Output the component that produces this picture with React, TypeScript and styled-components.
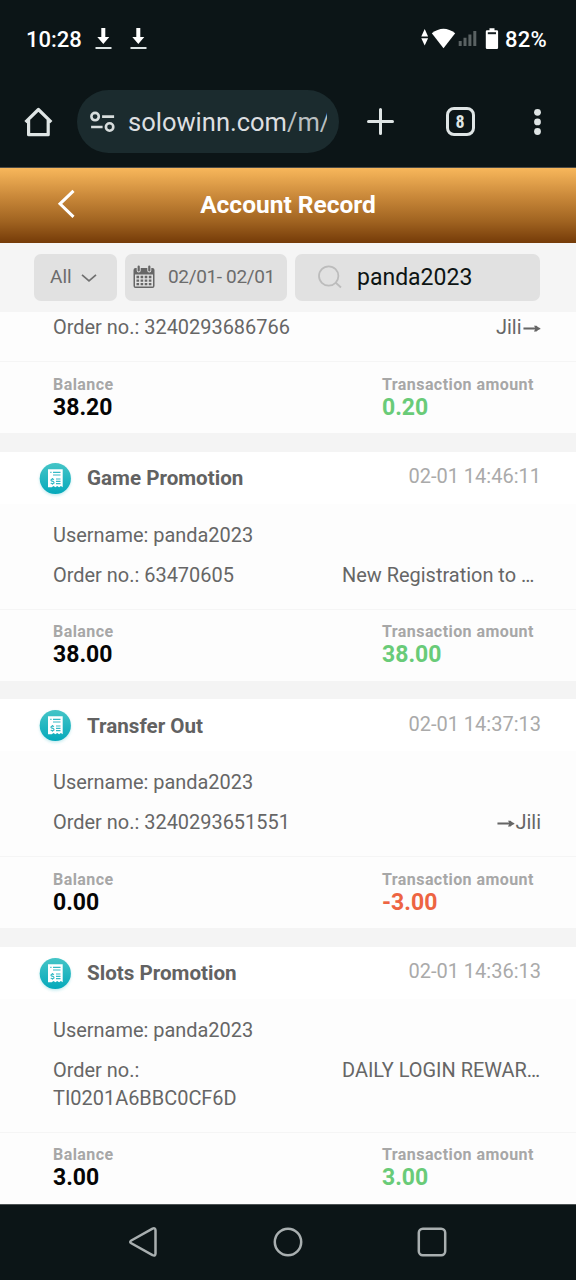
import React from "react";
import styled, { createGlobalStyle } from "styled-components";

const GlobalStyle = createGlobalStyle`
  * { box-sizing: border-box; }
  body { margin: 0; background: #0c1517; font-family: Roboto, "Liberation Sans", sans-serif; }
`;

const Screen = styled.main`
  width: 576px;
  height: 1280px;
  display: flex;
  flex-direction: column;
  overflow: hidden;
  background: #0c1517;
`;

const StatusBar = styled.div`
  height: 78px;
  flex: none;
  display: flex;
  align-items: center;
  justify-content: space-between;
  padding: 0 29px 0 26px;
  color: #fff;
  font-size: 22px;
  font-weight: 500;
  line-height: 28px;
`;

const StatusGroup = styled.div`
  display: flex;
  align-items: center;
`;

const StatusText = styled.span`
  padding-top: 2px;
`;

const BatteryLevel = styled(StatusText)`
  margin-left: 6px;
  letter-spacing: 0.3px;
`;

const BrowserBar = styled.div`
  height: 90px;
  flex: none;
  display: flex;
  align-items: center;
  padding: 0 31px 2px 23px;
  border-bottom: 1px solid #4b4a46;
`;

const AddressPill = styled.div`
  width: 262px;
  height: 63px;
  margin-left: 23px;
  padding: 0 12px 0 12px;
  display: flex;
  align-items: center;
  gap: 13px;
  border-radius: 32px;
  background: #1b2b2e;
`;

const Url = styled.div`
  width: 199px;
  padding-top: 2px;
  overflow: hidden;
  white-space: nowrap;
  color: #dddfe0;
  font-size: 25.5px;
  line-height: 35px;
`;

const Path = styled.span`
  color: #b9bfc0;
`;

const BrowserActions = styled.div`
  flex: 1;
  display: flex;
  align-items: center;
  padding-left: 28px;
`;

const TabCount = styled.div`
  width: 29px;
  height: 29px;
  margin: 0 55px 0 51.5px;
  display: flex;
  align-items: center;
  justify-content: center;
  border: 3px solid #dfe5e5;
  border-radius: 8px;
  color: #dfe5e5;
  font-family: "Roboto Condensed", Roboto, sans-serif;
  font-size: 18px;
  font-weight: 700;
  line-height: 20px;
`;

const PageHeader = styled.header`
  height: 75px;
  flex: none;
  display: grid;
  grid-template-columns: 100px 1fr 100px;
  align-items: center;
  padding-bottom: 3px;
  background: linear-gradient(#f8b75b 0%, #c78638 40%, #9f6220 72%, #753b08 100%);
`;

const BackButton = styled.div`
  display: flex;
  padding-left: 56px;
`;

const PageTitle = styled.h1`
  margin: 0;
  padding-top: 1px;
  text-align: center;
  color: #fff;
  font-size: 24.5px;
  font-weight: 700;
  line-height: 30px;
`;

const Filters = styled.div`
  height: 69px;
  flex: none;
  display: flex;
  align-items: flex-start;
  padding: 11px 36px 0 34px;
  gap: 8px;
  background: #f5f5f5;
`;

const FilterBox = styled.div<{ $width: number; $left: number; $gap: number }>`
  width: ${(p) => p.$width}px;
  height: 47px;
  flex: none;
  display: flex;
  align-items: center;
  gap: ${(p) => p.$gap}px;
  padding: 0 0 1px ${(p) => p.$left}px;
  border-radius: 7px;
  background: #e1e1e1;
  color: #6c6c6c;
  font-size: 19px;
  line-height: 24px;
  white-space: nowrap;
`;

const DateRange = styled.span`
  letter-spacing: -0.35px;
`;

const SearchValue = styled.span`
  padding-top: 2px;
  color: #0d1413;
  font-size: 23px;
`;

const RecordList = styled.div`
  height: 892px;
  flex: none;
  display: flex;
  flex-direction: column;
  gap: 18.5px;
  overflow: hidden;
  background: #f4f4f4;
`;

const Card = styled.article`
  flex: none;
  background: #fdfdfd;
`;

const CardHeader = styled.div`
  height: 52px;
  display: flex;
  align-items: center;
  padding: 0 35px 0 36px;
  background: #fff;
`;

const CardTitle = styled.h2`
  flex: 1;
  margin: 0 0 0 12px;
  padding-top: 1px;
  color: #626262;
  font-size: 20.6px;
  font-weight: 700;
  line-height: 26px;
`;

const Time = styled.time`
  padding-bottom: 3px;
  color: #aaa;
  font-size: 20px;
  line-height: 26px;
`;

const CardBody = styled.div<{ $top: number }>`
  display: flex;
  flex-direction: column;
  gap: 12px;
  padding: ${(p) => p.$top}px 35px 20px 53px;
  color: #666;
  font-size: 19.95px;
  line-height: 28px;
`;

const DetailRow = styled.div`
  display: flex;
  justify-content: space-between;
`;

const OrderNumber = styled.div`
  width: 260px;
  overflow-wrap: break-word;
`;

const Remark = styled.div<{ $wide?: boolean }>`
  display: flex;
  width: ${(p) => (p.$wide ? "199px" : "auto")};
  white-space: nowrap;
`;

const Arrow = styled.span`
  display: flex;
  justify-content: center;
  width: 19.5px;
  height: 28px;
  font-family: "Liberation Sans", sans-serif;
  font-size: 19.5px;
  line-height: 25px;
  -webkit-text-stroke: 1.2px #666;
  transform: scaleX(1.32);
`;

const CardFooter = styled.div`
  height: 72px;
  display: grid;
  grid-template-columns: 329px 1fr;
  padding: 11.7px 0 0 53px;
  border-top: 1px solid #f5f5f5;
`;

const Label = styled.div`
  color: #a7a7a7;
  font-size: 16px;
  font-weight: 700;
  line-height: 21px;
  letter-spacing: 0.43px;
`;

const Amount = styled.div<{ $color: string }>`
  color: ${(p) => p.$color};
  font-size: 23px;
  font-weight: 700;
  line-height: 26px;
`;

const NavBar = styled.nav`
  height: 76px;
  flex: none;
  display: flex;
  justify-content: center;
  gap: 112px;
  padding-top: 21px;
  border-top: 1px solid #4d5354;
`;

const Icon = styled.svg<{ $ml?: number }>`
  display: block;
  flex: none;
  margin-left: ${(p) => p.$ml ?? 0}px;
`;

const DownloadIcon = ({ ml }: { ml: number }) => (
  <Icon $ml={ml} width="17" height="24" viewBox="0 0 17 24">
    <path d="M6.3 1h4v9h4L8.3 17 2.3 10h4z" fill="#fff" />
    <path d="M.5 21h16" stroke="#dce3e3" strokeWidth="2" />
  </Icon>
);

const ReceiptBadge = () => (
  <Icon width="39" height="42" viewBox="0 0 39 42">
    <defs>
      <linearGradient id="badge" x1="0" y1="0" x2="0" y2="1">
        <stop offset="0" stopColor="#45c5c7" />
        <stop offset="1" stopColor="#05a9bb" />
      </linearGradient>
      <filter id="glow" x="-30%" y="-30%" width="160%" height="160%">
        <feGaussianBlur stdDeviation="1.5" />
      </filter>
    </defs>
    <circle cx="19.3" cy="23" r="15.5" fill="#9bdde3" opacity=".6" filter="url(#glow)" />
    <circle cx="19.3" cy="21.5" r="15.6" fill="url(#badge)" />
    <path d="M12 12.3h14.7v18l-1.8-1.2-1.8 1.2-1.9-1.2-1.8 1.2-1.9-1.2-1.8 1.2L12 30.3z" fill="#fff" />
    <path d="M14.3 15.3h1.2M17 15.3h7.5M17 18h7.5M20 22h4.5M20 24.3h4.5M20 26.6h4.5" stroke="#35bac5" strokeWidth="1.2" />
    <path d="M18 22.6q-1.6-.9-2.7-.1-.8 1.2.7 1.7 2.4.5 1.9 1.9-1.2 1.2-3.2 0M16.5 21v1.4M16.5 26.5v1.3" fill="none" stroke="#35bac5" strokeWidth="1.2" />
  </Icon>
);

const CalendarIcon = () => (
  <Icon width="22" height="24" viewBox="0 0 22 24">
    <path
      d="M2.5 3h17a2 2 0 0 1 2 2v16a2 2 0 0 1-2 2h-17a2 2 0 0 1-2-2V5a2 2 0 0 1 2-2z"
      fill="#666"
    />
    <path d="M2 9.5h18v12H2z" fill="#e1e1e1" />
    <path d="M5.7 1.5v4M16.3 1.5v4" stroke="#e1e1e1" strokeWidth="4" strokeLinecap="round" />
    <path d="M5.7 1.5v4M16.3 1.5v4" stroke="#666" strokeWidth="2.2" strokeLinecap="round" />
    <path d="M3.5 12h15.2M3.5 15.6h15.2M3.5 19.2h15.2" stroke="#666" strokeWidth="2.3" strokeDasharray="2.6 1.5" />
  </Icon>
);

const INCOME = "#69cb78";
const EXPENSE = "#ed6442";

interface RecordData {
  title?: string;
  time?: string;
  username?: string;
  order: string;
  remark: React.ReactNode;
  wide?: boolean;
  balance: string;
  amount: string;
}

const records: RecordData[] = [
  { order: "3240293686766", remark: <>Jili<Arrow>→</Arrow></>, balance: "38.20", amount: "0.20" },
  {
    title: "Game Promotion", time: "02-01 14:46:11", username: "panda2023",
    order: "63470605", remark: "New Registration to …", wide: true, balance: "38.00", amount: "38.00",
  },
  {
    title: "Transfer Out", time: "02-01 14:37:13", username: "panda2023",
    order: "3240293651551", remark: <><Arrow>→</Arrow>Jili</>, balance: "0.00", amount: "-3.00",
  },
  {
    title: "Slots Promotion", time: "02-01 14:36:13", username: "panda2023",
    order: "TI0201A6BBC0CF6D", remark: "DAILY LOGIN REWAR…", wide: true, balance: "3.00", amount: "3.00",
  },
];

const RecordCard = ({ record }: { record: RecordData }) => (
  <Card>
    {record.title && (
      <CardHeader>
        <ReceiptBadge />
        <CardTitle>{record.title}</CardTitle>
        <Time>{record.time}</Time>
      </CardHeader>
    )}
    <CardBody $top={record.title ? 17 : 1}>
      {record.username && <div>Username: {record.username}</div>}
      <DetailRow>
        <OrderNumber>Order no.: {record.order}</OrderNumber>
        <Remark $wide={record.wide}>{record.remark}</Remark>
      </DetailRow>
    </CardBody>
    <CardFooter>
      <div>
        <Label>Balance</Label>
        <Amount $color="#050505">{record.balance}</Amount>
      </div>
      <div>
        <Label>Transaction amount</Label>
        <Amount $color={record.amount.startsWith("-") ? EXPENSE : INCOME}>{record.amount}</Amount>
      </div>
    </CardFooter>
  </Card>
);

export default function App() {
  return (
    <>
      <GlobalStyle />
      <Screen>
        <StatusBar>
          <StatusGroup>
            <StatusText>10:28</StatusText>
            <DownloadIcon ml={13} />
            <DownloadIcon ml={18} />
          </StatusGroup>
          <StatusGroup>
            <Icon width="78" height="24" viewBox="0 0 78 24">
              <path d="M.3 9.5 3.7 2l3.4 7.5zM.3 11.3h6.800L3.700 18.500z" fill="#fff" />
              <path d="M10.800 6.200Q22.500 -2.800 34.200 6.200L22.500 21.300z" fill="#fff" />
              <path d="M39.200 14v5M44 10.800V19M48.900 7.500V19M53.800 4v15" stroke="#5a6263" strokeWidth="3" />
              <path d="M68.500 1.300h5v2h2.300q1.300 0 1.300 1.300v16.100q0 1.300-1.300 1.300h-9.700q-1.300 0-1.300-1.300V4.600q0-1.300 1.300-1.300h2.400z" fill="#fff" />
              <path d="M66.800 6.200h8.200" stroke="#182124" strokeWidth="2" />
            </Icon>
            <BatteryLevel>82%</BatteryLevel>
          </StatusGroup>
        </StatusBar>

        <BrowserBar>
          <Icon width="31" height="32" viewBox="0 0 31 32">
            <path d="M2.5 16.2 15.4 3.5l12.9 12.7M5.6 14v14.7h19.6V14" fill="none" stroke="#dfe5e5" strokeWidth="3.2" strokeLinejoin="round" />
          </Icon>
          <AddressPill>
            <Icon width="26" height="24" viewBox="0 0 26 24">
              <g fill="none" stroke="#d8dddd" strokeWidth="2.6">
                <circle cx="6.1" cy="6.6" r="3.7" />
                <path d="M13.1 6.6h12M2.100 17h11.500" />
                <circle cx="20.6" cy="17" r="3.7" />
              </g>
            </Icon>
            <Url>solowinn.com<Path>/m/</Path></Url>
          </AddressPill>
          <BrowserActions>
            <Icon width="27" height="27" viewBox="0 0 27 27">
              <path d="M13.5 1.5v24M1.5 13.5h24" stroke="#dfe5e5" strokeWidth="3" strokeLinecap="round" />
            </Icon>
            <TabCount>8</TabCount>
            <Icon width="14" height="28" viewBox="0 0 14 28" fill="#dfe5e5">
              <circle cx="7.5" cy="4.3" r="3.4" />
              <circle cx="7.5" cy="13.9" r="3.4" />
              <circle cx="7.5" cy="23.5" r="3.4" />
            </Icon>
          </BrowserActions>
        </BrowserBar>

        <PageHeader>
          <BackButton>
            <Icon width="20" height="30" viewBox="0 0 20 30">
              <path d="M17.5 1.8 4 14.8l13.5 13" fill="none" stroke="#fff" strokeWidth="3" />
            </Icon>
          </BackButton>
          <PageTitle>Account Record</PageTitle>
        </PageHeader>

        <Filters>
          <FilterBox $width={83} $left={16} $gap={9}>
            All
            <Icon width="16" height="10" viewBox="0 0 16 10">
              <path d="m1 2.8 7 6 7-6" fill="none" stroke="#707070" strokeWidth="1.7" />
            </Icon>
          </FilterBox>
          <FilterBox $width={162} $left={8} $gap={13}>
            <CalendarIcon />
            <DateRange>02/01- 02/01</DateRange>
          </FilterBox>
          <FilterBox $width={245} $left={22} $gap={15}>
            <Icon width="25" height="24" viewBox="0 0 25 24">
              <g fill="none" stroke="#bcbcbc" strokeWidth="1.8">
                <circle cx="11.7" cy="11" r="9.7" />
                <path d="m18.5 17.5 5.5 5" />
              </g>
            </Icon>
            <SearchValue>panda2023</SearchValue>
          </FilterBox>
        </Filters>

        <RecordList>
          {records.map((record) => (
            <RecordCard key={record.order} record={record} />
          ))}
        </RecordList>

        <NavBar>
          <Icon width="32" height="32" viewBox="0 0 32 32">
            <path d="M3.3 14.5 24.500 2.600q3-1.200 3 1.800v23q0 3-3 1.800L3.300 17.300q-2.200-1.400 0-2.800z" fill="none" stroke="#a9afb0" strokeWidth="2.5" />
          </Icon>
          <Icon width="32" height="32" viewBox="0 0 32 32">
            <circle cx="16" cy="16" r="13.2" fill="none" stroke="#a9afb0" strokeWidth="2.5" />
          </Icon>
          <Icon width="32" height="32" viewBox="0 0 32 32">
            <rect x="2.8" y="2.8" width="26.4" height="26.4" rx="4" fill="none" stroke="#a9afb0" strokeWidth="2.5" />
          </Icon>
        </NavBar>
      </Screen>
    </>
  );
}
